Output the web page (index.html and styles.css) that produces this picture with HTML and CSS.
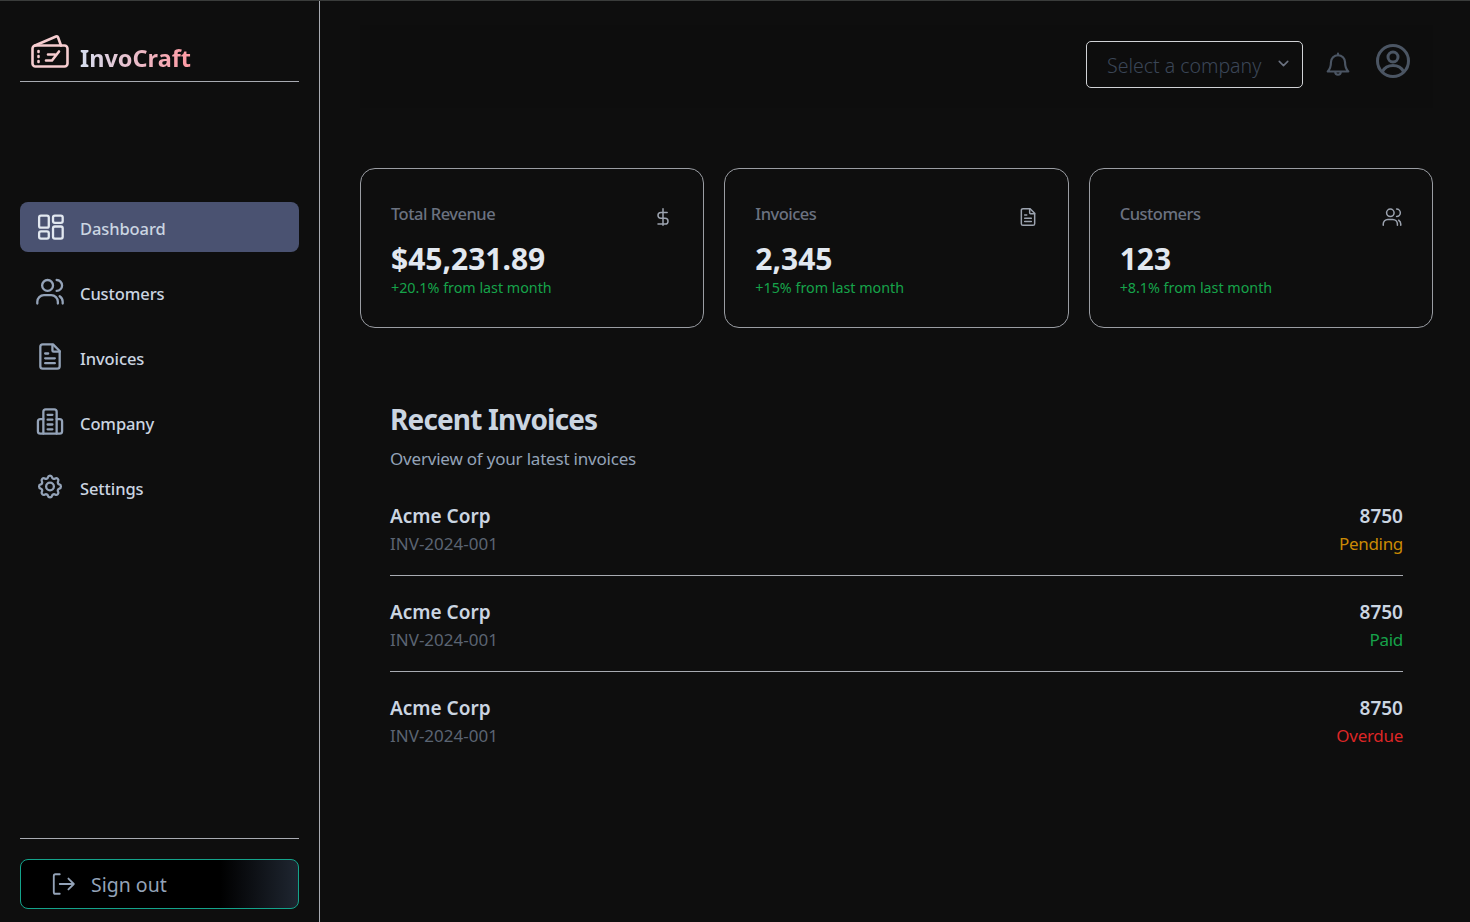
FILE: index.html
```html
<!DOCTYPE html>
<html lang="en">
<head>
    <meta charset="UTF-8">
    <meta name="viewport" content="width=device-width, initial-scale=1.0">
    <title>InvoCraft Dashboard</title>
    <link rel="stylesheet" href="styles.css">
</head>
<body>
    <div class="app">
        <aside class="sidebar">
            <div class="brand">
                <svg class="brand-icon" viewBox="0 0 38 34">
                    <path d="M4 10.500 25 1.500q1.500-.5 2 .7L30 10.500"/>
                    <rect x="1.500" y="10.500" width="35" height="21" rx="3"/>
                    <path d="M7.500 16v1M7.500 21v1M7.500 26v1"/>
                    <path d="M15 25.500h6l7-9M17 19.500h7"/>
                </svg>
                <span class="brand-name">InvoCraft</span>
            </div>

            <nav class="nav">
                <a class="nav-item active" href="#">
                    <svg class="nav-icon" viewBox="0 0 24 24"><rect x="3" y="3" width="8" height="10" rx="1.500"/><rect x="14.500" y="3" width="8" height="6" rx="1.500"/><rect x="14.500" y="12" width="8" height="10" rx="1.500"/><rect x="3" y="16" width="8" height="6" rx="1.500"/></svg>
                    Dashboard
                </a>
                <a class="nav-item" href="#">
                    <svg class="nav-icon" viewBox="0 0 24 24"><circle cx="10" cy="7" r="4.500"/><path d="M1.500 22v-1.500a5.500 5.500 0 0 1 5.500-5.500h6a5.500 5.500 0 0 1 5.500 5.500V22"/><path d="M17.500 2.500a4.500 4.500 0 0 1 0 9"/><path d="M22.500 22v-1.500a5.500 5.500 0 0 0-2.500-4.600"/></svg>
                    Customers
                </a>
                <a class="nav-item" href="#">
                    <svg class="nav-icon" viewBox="0 0 24 24"><path d="M14.500 2H6a2 2 0 0 0-2 2v16a2 2 0 0 0 2 2h12a2 2 0 0 0 2-2V7.500z"/><path d="M14 2.500V7a1 1 0 0 0 1 1h5"/><path d="M8 9.500h2.500M8 13.500h8M8 17.500h8"/></svg>
                    Invoices
                </a>
                <a class="nav-item" href="#">
                    <svg class="nav-icon" viewBox="0 0 24 24"><path d="M6.500 22V4a2 2 0 0 1 2-2h7a2 2 0 0 1 2 2v18"/><path d="M6.500 10H4a2 2 0 0 0-2 2v8a2 2 0 0 0 2 2h16a2 2 0 0 0 2-2v-8a2 2 0 0 0-2-2h-2.500"/><path d="M10 6.500h4M10 10.500h4M10 14.500h4M10 18.500h4"/></svg>
                    Company
                </a>
                <a class="nav-item" href="#">
                    <svg class="nav-icon" viewBox="0 0 24 24"><path d="M10.300 4.300c.4-1.800 3-1.800 3.400 0a1.700 1.700 0 0 0 2.600 1.100c1.500-.9 3.300.8 2.400 2.400a1.700 1.700 0 0 0 1 2.500c1.800.4 1.800 3 0 3.400a1.700 1.700 0 0 0-1 2.600c.9 1.500-.9 3.300-2.400 2.400a1.700 1.700 0 0 0-2.600 1c-.4 1.800-3 1.800-3.400 0a1.700 1.700 0 0 0-2.600-1c-1.500.9-3.300-.9-2.400-2.400a1.700 1.700 0 0 0-1-2.600c-1.800-.4-1.800-3 0-3.400a1.700 1.700 0 0 0 1-2.500c-.9-1.600.9-3.300 2.400-2.400a1.700 1.700 0 0 0 2.600-1.100z"/><circle cx="12" cy="12" r="3.200"/></svg>
                    Settings
                </a>
            </nav>

            <div class="sidebar-foot">
                <button class="signout">
                    <svg class="signout-icon" viewBox="0 0 24 24"><path d="M9 3H5a1.500 1.500 0 0 0-1.500 1.500v15A1.500 1.500 0 0 0 5 21h4"/><path d="M9 12h13M17 7l5 5-5 5"/></svg>
                    Sign out
                </button>
            </div>
        </aside>

        <main class="main">
            <header class="topbar">
                <div class="company-select">
                    <span>Select a company</span>
                    <svg class="chevron" viewBox="0 0 24 24"><path d="m6 9 6 6 6-6"/></svg>
                </div>
                <svg class="bell" viewBox="0 0 24 24"><path d="M12 3a6.500 6.500 0 0 0-6.500 6.500c0 5-1 6.500-3 8.500h19c-2-2-3-3.500-3-8.500A6.500 6.500 0 0 0 12 3z"/><path d="M12 1.500V3M9.500 18.500a2.500 2.500 0 0 0 5 0"/></svg>
                <svg class="profile" viewBox="0 0 34 34"><circle cx="17" cy="17" r="15.500"/><circle cx="17" cy="13" r="5"/><path d="M6.500 27.500c2-4 6-6 10.500-6s8.500 2 10.500 6"/></svg>
            </header>

            <section class="stats">
                <div class="card">
                    <div class="card-head">
                        <span class="card-title">Total Revenue</span>
                        <svg class="card-icon" viewBox="0 0 24 24"><path d="M12 2v20M17 6.500H9.500a3.500 3.500 0 0 0 0 7h5a3.500 3.500 0 0 1 0 7H6"/></svg>
                    </div>
                    <div class="card-value">$45,231.89</div>
                    <div class="card-note">+20.1% from last month</div>
                </div>
                <div class="card">
                    <div class="card-head">
                        <span class="card-title">Invoices</span>
                        <svg class="card-icon" viewBox="0 0 24 24"><path d="M14.500 2H6a2 2 0 0 0-2 2v16a2 2 0 0 0 2 2h12a2 2 0 0 0 2-2V7.500z"/><path d="M14 2.500V7a1 1 0 0 0 1 1h5"/><path d="M8 9.500h2.500M8 13.500h8M8 17.500h8"/></svg>
                    </div>
                    <div class="card-value">2,345</div>
                    <div class="card-note">+15% from last month</div>
                </div>
                <div class="card">
                    <div class="card-head">
                        <span class="card-title">Customers</span>
                        <svg class="card-icon" viewBox="0 0 24 24"><circle cx="10" cy="7" r="4.500"/><path d="M1.500 22v-1.500a5.500 5.500 0 0 1 5.500-5.500h6a5.500 5.500 0 0 1 5.500 5.500V22"/><path d="M17.500 2.500a4.500 4.500 0 0 1 0 9"/><path d="M22.500 22v-1.500a5.500 5.500 0 0 0-2.500-4.600"/></svg>
                    </div>
                    <div class="card-value">123</div>
                    <div class="card-note">+8.1% from last month</div>
                </div>
            </section>

            <section class="recent">
                <h2 class="recent-title">Recent Invoices</h2>
                <p class="recent-sub">Overview of your latest invoices</p>

                <div class="invoice">
                    <div>
                        <div class="invoice-name">Acme Corp</div>
                        <div class="invoice-id">INV-2024-001</div>
                    </div>
                    <div class="invoice-right">
                        <div class="invoice-amount">8750</div>
                        <div class="status-pending">Pending</div>
                    </div>
                </div>
                <div class="invoice">
                    <div>
                        <div class="invoice-name">Acme Corp</div>
                        <div class="invoice-id">INV-2024-001</div>
                    </div>
                    <div class="invoice-right">
                        <div class="invoice-amount">8750</div>
                        <div class="status-paid">Paid</div>
                    </div>
                </div>
                <div class="invoice">
                    <div>
                        <div class="invoice-name">Acme Corp</div>
                        <div class="invoice-id">INV-2024-001</div>
                    </div>
                    <div class="invoice-right">
                        <div class="invoice-amount">8750</div>
                        <div class="status-overdue">Overdue</div>
                    </div>
                </div>
            </section>
        </main>
    </div>
</body>
</html>
```

FILE: styles.css
```css
* {
    box-sizing: border-box;
}

body {
    margin: 0;
    background-color: #0e0e0e;
    color: #cbd5e1;
    font-family: "Noto Sans", "Open Sans", sans-serif;
    font-size: 17px;
    overflow: hidden;
}

svg {
    fill: none;
    stroke-linecap: round;
    stroke-linejoin: round;
    flex-shrink: 0;
}

.app {
    display: flex;
    height: 922px;
    border-top: 1px solid #3a3c3b;
}

/* sidebar */
.sidebar {
    width: 320px;
    flex-shrink: 0;
    display: flex;
    flex-direction: column;
    padding: 0 20px 13px;
    border-right: 1px solid #a8abb2;
}

.brand {
    height: 81px;
    display: flex;
    align-items: flex-end;
    gap: 11px;
    padding: 0 0 6px 11px;
    border-bottom: 1px solid #a8abb2;
}

.brand-icon {
    width: 38px;
    height: 34px;
    margin-bottom: 6px;
    stroke: #f6cdd0;
    stroke-width: 2.600;
}

.brand-name {
    font-size: 23.500px;
    font-weight: 700;
    line-height: 34px;
    background: linear-gradient(to right, #d5deef, #ff9aa2);
    -webkit-background-clip: text;
    background-clip: text;
    color: transparent;
}

.nav {
    margin-top: 120px;
    display: flex;
    flex-direction: column;
    gap: 15px;
}

.nav-item {
    height: 50px;
    display: flex;
    align-items: center;
    gap: 15px;
    padding: 3px 0 0 15px;
    border-radius: 8px;
    color: #cbd5e1;
    font-size: 16.500px;
    font-weight: 500;
    letter-spacing: -0.1px;
    text-decoration: none;
}

.nav-item.active {
    background-color: #4a5271;
}

.nav-icon {
    width: 30px;
    height: 29px;
    margin-top: -4px;
    stroke: #94a3b8;
    stroke-width: 1.900;
}

.active .nav-icon {
    stroke: #e2e8f0;
}

.sidebar-foot {
    margin-top: auto;
    padding-top: 20px;
    border-top: 1px solid #a8abb2;
}

.signout {
    width: 100%;
    height: 50px;
    display: flex;
    align-items: center;
    gap: 15px;
    padding: 0 0 0 29px;
    border: 1px solid #14a38b;
    border-radius: 8px;
    background: linear-gradient(to right, #000 72%, #1f2631);
    color: #94a3b8;
    font-family: inherit;
    font-size: 19.500px;
}

.signout-icon {
    width: 26px;
    height: 26px;
    stroke: #94a3b8;
    stroke-width: 1.700;
}

/* main */
.main {
    flex: 1;
    padding: 0 37px 0 40px;
}

.topbar {
    height: 83px;
    margin-top: 24px;
    display: flex;
    align-items: flex-start;
    justify-content: flex-end;
    padding: 16px 23px 0 0;
    background-color: #0d0d0d;
}

.company-select {
    width: 217px;
    height: 47px;
    display: flex;
    align-items: center;
    justify-content: space-between;
    padding: 2px 10px 0 20px;
    border: 1px solid #d1d3d6;
    border-radius: 5px;
    color: #3b4657;
    font-size: 19.500px;
    font-weight: 300;
}

.chevron {
    width: 17px;
    height: 17px;
    margin-top: -4px;
    stroke: #6b7280;
    stroke-width: 2.200;
}

.bell {
    width: 26px;
    height: 28px;
    margin: 10px 0 0 22px;
    stroke: #4b5563;
    stroke-width: 2;
}

.profile {
    width: 34px;
    height: 34px;
    margin: 3px 0 0 25px;
    stroke: #4b5563;
    stroke-width: 3;
}

.stats {
    margin-top: 60px;
    display: grid;
    grid-template-columns: repeat(3, 1fr);
    gap: 20px;
}

.card {
    height: 160px;
    padding: 30px 30px 0;
    border: 1px solid #9a9da3;
    border-radius: 15px;
}

.card-head {
    display: flex;
    justify-content: space-between;
    align-items: flex-start;
}

.card-title {
    color: #6b7280;
    font-size: 16.500px;
    line-height: 30px;
    font-weight: 500;
    letter-spacing: -0.5px;
}

.card-icon {
    width: 20px;
    height: 20px;
    margin-top: 8px;
    stroke: #9ca3af;
    stroke-width: 1.800;
}

.card-value {
    margin-top: 10px;
    color: #e2e8f0;
    font-size: 30px;
    line-height: 40px;
    font-weight: 700;
}

.card-note {
    color: #16a34a;
    font-size: 14.300px;
    line-height: 18px;
}

.recent {
    margin-top: 68px;
    padding: 0 30px;
}

.recent-title {
    margin: 0;
    color: #cbd5e1;
    font-size: 28px;
    line-height: 46px;
    font-weight: 700;
    letter-spacing: -0.850px;
}

.recent-sub {
    margin: 4px 0 8px;
    color: #94a3b8;
    line-height: 26px;
    letter-spacing: -0.2px;
}

.invoice {
    display: flex;
    justify-content: space-between;
    height: 96px;
    padding-top: 23px;
    line-height: 27px;
    border-bottom: 1px solid #a8abb2;
}

.invoice:last-child {
    border-bottom: none;
}

.invoice-name,
.invoice-amount {
    color: #cbd5e1;
    font-size: 19px;
    font-weight: 600;
}

.invoice-id {
    color: #5b6472;
}

.invoice-right {
    text-align: right;
}

.status-pending {
    color: #ca8a04;
    letter-spacing: -0.3px;
}

.status-paid {
    color: #16a34a;
    letter-spacing: -0.3px;
}

.status-overdue {
    color: #dc2626;
    letter-spacing: -0.3px;
}
```
